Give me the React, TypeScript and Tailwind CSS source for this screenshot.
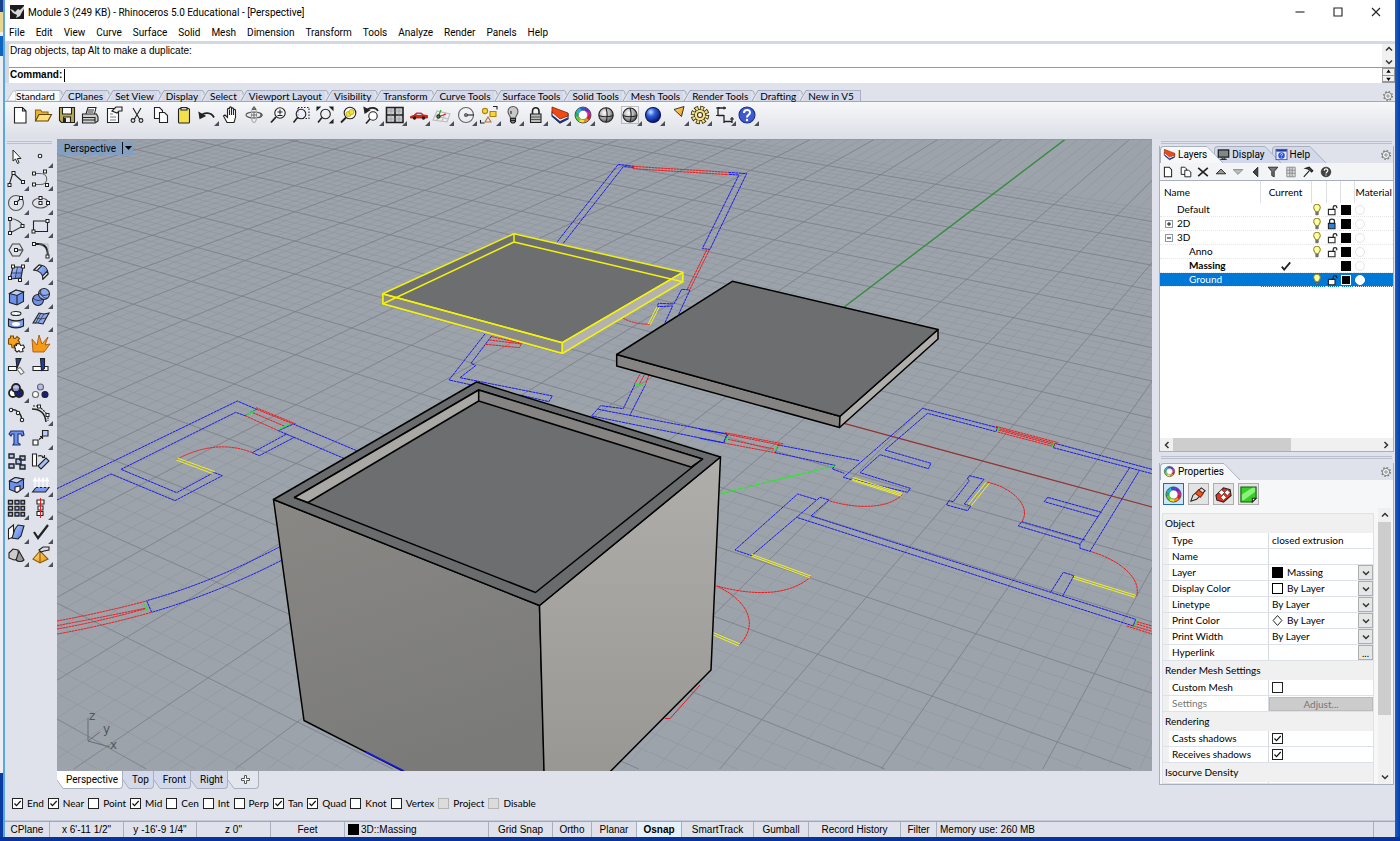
import type { ReactNode } from "react";

const lato = "font-[Lato,sans-serif] text-[10px]";
const menus = ["File", "Edit", "View", "Curve", "Surface", "Solid", "Mesh", "Dimension", "Transform", "Tools", "Analyze", "Render", "Panels", "Help"];
const toolTabs = [
  "CPlanes", "Set View", "Display", "Select", "Viewport Layout", "Visibility", "Transform", "Curve Tools",
  "Surface Tools", "Solid Tools", "Mesh Tools", "Render Tools", "Drafting", "New in V5",
];

type Tool = { name: string; art: ReactNode; more?: boolean };

const Gradients = () => (
  <svg className="absolute h-0 w-0" aria-hidden="true">
    <defs>
      <radialGradient id="blueBall" cx=".35" cy=".3" r=".7">
        <stop offset="0" stopColor="#cfe0ff" />
        <stop offset=".4" stopColor="#2f62dd" />
        <stop offset="1" stopColor="#06176e" />
      </radialGradient>
      <radialGradient id="greyBall" cx=".4" cy=".35" r=".7">
        <stop offset="0" stopColor="#ffffff" />
        <stop offset=".5" stopColor="#b4b4b4" />
        <stop offset="1" stopColor="#4c4c4c" />
      </radialGradient>
      <linearGradient id="blueFace" x1="0" y1="0" x2="1" y2="1">
        <stop offset="0" stopColor="#b9ccff" />
        <stop offset="1" stopColor="#4c78e0" />
      </linearGradient>
      <linearGradient id="gold" x1="0" y1="0" x2="1" y2="1">
        <stop offset="0" stopColor="#ffe27a" />
        <stop offset="1" stopColor="#ee8f10" />
      </linearGradient>
    </defs>
  </svg>
);

const Art = ({ children, className = "h-5 w-5" }: { children: ReactNode; className?: string }) => (
  <svg viewBox="0 0 20 20" className={className} fill="none" stroke="#222" strokeWidth="1.1" aria-hidden="true">
    {children}
  </svg>
);

const wheelColors = ["#e01b24", "#f08a1c", "#f5e61a", "#5fd02a", "#19b56a", "#18b8d8", "#2456e0", "#6a28c8", "#c81fb0"];

const Wheel = () => (
  <>
    {wheelColors.map((color, i) => (
      <circle key={color} cx="10" cy="10" r="6.2" stroke={color} strokeWidth="3.2" strokeDasharray="4.6 34.36" strokeDashoffset={-i * 4.33} />
    ))}
    <circle cx="10" cy="10" r="8" stroke="#333" strokeWidth=".8" />
    <circle cx="10" cy="10" r="4.6" stroke="#555" strokeWidth=".6" fill="#fff" />
  </>
);

const LayerMark = () => (
  <>
    <path d="M2 7v4l8 7 8-4V9z" fill="#fff" />
    <path d="M2.500 10l7.500 6 7.500-3.500v2l-7.500 3.500-7.500-6z" fill="#1d2d8c" stroke="none" />
    <path d="M2 2l16 6v3l-8 3-8-7z" fill="#f04a14" stroke="#8c1c0a" strokeWidth=".8" />
  </>
);

const Gear = () => (
  <>
    <circle cx="10" cy="10" r="7" strokeWidth="2.6" strokeDasharray="2.6 2.9" />
    <circle cx="10" cy="10" r="6" fill="inherit" />
    <circle cx="10" cy="10" r="2" />
  </>
);

const Magnifier = () => (
  <>
    <circle cx="12" cy="8" r="5.2" fill="#fff" fillOpacity=".6" />
    <path d="M8 12l-5 5.500" strokeWidth="1.8" />
  </>
);

const standardTools: Tool[] = [
  { name: "New", art: <path d="M4.500 2.500h8l3.500 3.500v12H4.500z M12.500 2.500v3.500H16" fill="#fff" /> },
  { name: "Open", art: <><path d="M2.500 16V5h5l1.500 2h6v2.500" fill="#e9b430" stroke="#8a6410" /><path d="M2.500 16L6 9.500h12.500L15 16z" fill="#ffe07a" stroke="#5d4308" /></> },
  { name: "Save", more: true, art: <><path d="M2.500 2.500h15v15h-13l-2-2z" fill="#b9ab53" /><path d="M5.500 2.500h9v6.500h-9z" fill="#fff" /><path d="M6.500 12h7v5.500h-7z" fill="#eee" /><path d="M8 13v4" strokeWidth="2" /></> },
  { name: "Print", art: <><path d="M6 9l2-6.500h8L14.500 9" fill="#fff" /><path d="M2.500 9h14l1.500 3v4l-3 2H2.500z" fill="#cfcfcf" /><path d="M3 12.500h12M3 15h12M15 12v5M8 5h6M7.500 7h6" /></> },
  { name: "Document properties", art: <><path d="M3.500 3.500h11v14h-11z" fill="#fff" /><path d="M8 6l4-4h6v4h-3l-2 2z" fill="#eee" /><path d="M6 9h3M6 12h6M6 15h6" strokeWidth=".6" /></> },
  { name: "Cut", art: <><path d="M6 3l6.500 11M14 3L7.500 14" /><circle cx="6" cy="15.500" r="1.900" /><circle cx="14" cy="15.500" r="1.900" /></> },
  { name: "Copy", art: <><path d="M3.500 2.500h5l3 3v8h-8z" fill="#fff" /><path d="M8.500 7.500h5l3 3v7h-8z" fill="#fff" /></> },
  { name: "Paste", art: <><rect x="4.500" y="3.500" width="11" height="14.500" rx="1" fill="#f4e04a" /><path d="M7 5V2.500h6V5z" fill="#ddd" /></> },
  { name: "Undo", more: true, art: <><path d="M4 11c3-4 10-4 13 1.500" strokeWidth="1.800" /><path d="M2 7.500l1 6 5-2.500z" fill="#222" /></> },
  { name: "Pan", art: <path d="M6 17.500L2.500 11l1.500-1 2.500 2.500V4.500c0-1.500 2-1.500 2 0V3c0-1.500 2-1.500 2 0v1c0-1.500 2-1.500 2 0v1.500c0-1.500 2-1.500 2 0v7l-1.500 5z M8.500 5v5M10.500 4v6M12.500 5v5" fill="#fff" /> },
  { name: "Rotate view", art: <><ellipse cx="10" cy="10" rx="8" ry="3" stroke="#555" /><ellipse cx="10" cy="10" rx="2.600" ry="7.500" stroke="#aaa" /><path d="M10 7v6M7 10h6M16 8l2.500 2-2.500 2.500M10 1.500L8 4.500h4z" fill="#777" stroke="#444" strokeWidth=".7" /></> },
  { name: "Zoom", art: <><Magnifier /><path d="M12 4.500v5M9.500 7h5M9.500 10.500h5" /></> },
  { name: "Zoom window", art: <><path d="M7 2.500h11v11H7z" strokeDasharray="1.500 1.500" /><circle cx="10" cy="9" r="4.800" fill="#eef" fillOpacity=".6" /><path d="M6.500 12.500L2.500 17.500" strokeWidth="1.600" /></> },
  { name: "Zoom extents", art: <><circle cx="10.500" cy="9" r="4.800" /><path d="M7 12.500L3 17.500" strokeWidth="1.600" /><path d="M2 5V2h3zM15 2h3v3zM18 15v3h-3z" fill="#111" /></> },
  { name: "Zoom selected", art: <><circle cx="12" cy="8" r="5.800" fill="#fff" /><g stroke="#b7a510" strokeWidth=".8"><circle cx="10.500" cy="9" r="2.600" fill="#f4e23a" /><circle cx="13.500" cy="7" r="2.600" fill="#f4e23a" /></g><path d="M8 12.500L3 17.500" strokeWidth="1.800" /></> },
  { name: "Undo view", more: true, art: <><circle cx="11" cy="11" r="4.200" fill="#fff" /><path d="M8 14l-4 4.500" strokeWidth="1.600" /><path d="M5 5c3-3 9-3 11 1" strokeWidth="1.600" /><path d="M2 2.500L3 8l4.500-3z" fill="#222" /></> },
  { name: "Four viewports", more: true, art: <><path d="M1.500 2.500h16.500v15H1.500z" fill="#c9cbd0" strokeWidth="1.600" /><path d="M10 2.500v15M1.500 10H18" strokeWidth="1.600" /><path d="M6 3v14M14 3v14M2 6h16M2 14h16" stroke="#888" strokeWidth=".5" /></> },
  { name: "Set view", more: true, art: <><path d="M1.500 11.500l3-1 3-2.500h5l2 2 4 .500v2.500H1.500z" fill="#e22314" stroke="#b01408" strokeWidth=".8" /><path d="M7 10l1.500-1.200h3L13 10z" fill="#bdf" stroke="none" /><circle cx="5.500" cy="13" r="1.200" fill="#222" /><circle cx="14.500" cy="13" r="1.200" fill="#222" /></> },
  { name: "Set CPlane", more: true, art: <><path d="M1 15l4-9 13 3-3 8zM5 15l3-8M10 16l3-8M3 11l14 3" stroke="#bbb" /><path d="M6 12l8-3" stroke="#d22" /><path d="M6 12L9 5" stroke="#2a2" /><circle cx="6.500" cy="11.500" r="1.600" /></> },
  { name: "Object snap", more: true, art: <><circle cx="10" cy="10" r="7.500" stroke="#666" /><path d="M10 10h8" /><circle cx="10" cy="10" r="1.300" fill="#fff" /></> },
  { name: "Select objects", more: true, art: <><circle cx="6" cy="6" r="2.600" fill="#f8d838" stroke="#b0830c" /><path d="M11 6.500h6v5h-6z" fill="#f8d838" stroke="#b0830c" /><path d="M6 17l3-5 3 5z" stroke="#b0703c" /><path d="M14 1.500h4v3M1.500 15v3h4" /></> },
  { name: "Hide", more: true, art: <><path d="M7.500 13c0-2-2.500-3.500-2.500-6.500a5 5 0 0110 0c0 3-2.500 4.500-2.500 6.500z" fill="#c8c8c8" stroke="#555" /><path d="M7.500 13.500h5v3l-1.500 1.500h-2l-1.500-1.500z" fill="#888" /><path d="M8 6v3M8 15.500h4" /></> },
  { name: "Lock", more: true, art: <><path d="M6.500 9V6.500C6.500 1.500 13 1.500 13 6.500V9" strokeWidth="1.600" /><path d="M4.500 9h10.500v8.500H4.500z" fill="#bcbcbc" /><path d="M5 12h9.500M5 14.500h9.500" strokeWidth=".7" /></> },
  { name: "Edit layers", more: true, art: <LayerMark /> },
  { name: "Object properties", more: true, art: <Wheel /> },
  { name: "Shade", art: <><circle cx="10" cy="10" r="7.200" fill="url(#greyBall)" /><path d="M2.800 10.500c4 1.500 10 1.500 14.400 0M10 2.800c1.500 5 1.500 10 0 14.400" /></> },
  { name: "Shaded viewport", more: true, art: <><path d="M1.500 1.500h17v17h-17z" stroke="#888" strokeDasharray="1 1" /><circle cx="10" cy="10" r="7" fill="url(#greyBall)" /><path d="M3 10.500c4 1.500 10 1.500 14 0M10 3c1.500 5 1.500 10 0 14" /></> },
  { name: "Render", more: true, art: <circle cx="10" cy="10" r="7.500" fill="url(#blueBall)" stroke="#061560" /> },
  { name: "Notes", more: true, art: <path d="M7 4.500l10-3-2.500 10z" fill="url(#gold)" strokeWidth=".9" /> },
  {
    name: "Options",
    more: true,
    art: (
      <g stroke="#3d3208">
        <circle cx="10" cy="10" r="7.300" strokeWidth="4" strokeDasharray="3.900 1.833" />
        <circle cx="10" cy="10" r="5.800" fill="#f3e08a" />
        <circle cx="10" cy="10" r="7" stroke="#f3e08a" strokeWidth="2.800" strokeDasharray="2.200 3.298" strokeDashoffset="-.800" />
        <circle cx="10" cy="10" r="2.500" fill="#fff" />
      </g>
    ),
  },
  { name: "Dimension", more: true, art: <><path d="M4 2v9M4 3h8M4 10.500h6M10 10v8M10 16.500h8M18 12v6" strokeWidth="1.300" /><path d="M2 3h4M2 10.500h4M10 1.500v3M16 14h4" /></> },
  { name: "Help topics", more: true, art: <><circle cx="10" cy="10" r="8" fill="#3d5bcf" stroke="#1f2f86" /><path d="M7 8c0-4 6-4 6-.500 0 2.500-3 2.300-3 5" stroke="#fff" strokeWidth="2" /><circle cx="10" cy="15" r="1.200" fill="#fff" stroke="none" /></> },
];

const Dot = ({ x, y }: { x: number; y: number }) => <rect x={x - 1.5} y={y - 1.5} width="3" height="3" fill="#fff" strokeWidth="1" />;

const sideTools: Tool[] = [
  { name: "Select", art: <path d="M6 4v11l2.500-2 2 4.500 1.600-.800-1.800-4.200h3.700z" fill="#fff" strokeWidth="1" /> },
  { name: "Point", more: true, art: <circle cx="9" cy="10" r="1.800" fill="#fff" /> },
  { name: "Polyline", more: true, art: <><path d="M2 16L6 4l10 9" /><Dot x={2.5} y={16} /><Dot x={6.500} y={4} /><Dot x={16} y={13} /></> },
  { name: "Curve", more: true, art: <><path d="M3 4.500h6c9 0 9 11 0 11H3" stroke="#666" /><Dot x={3} y={4.500} /><Dot x={14} y={2.500} /><Dot x={3} y={15.500} /><Dot x={16} y={16} /></> },
  { name: "Circle", more: true, art: <><circle cx="9" cy="10" r="7.500" stroke="#555" /><path d="M9 10l5-5" /><Dot x={9} y={10} /><Dot x={14} y={5} /></> },
  { name: "Ellipse", more: true, art: <><ellipse cx="9.500" cy="10" rx="8" ry="5" stroke="#555" /><Dot x={9.500} y={10} /><Dot x={9.500} y={5} /><Dot x={17} y={10} /></> },
  { name: "Arc", more: true, art: <><path d="M3 17L3 2.500c6 0 12 4 13 7.500z" stroke="#444" /><Dot x={3} y={3} /><Dot x={3} y={17} /><Dot x={15.500} y={10} /></> },
  { name: "Rectangle", more: true, art: <><path d="M2.500 5h14v10.500h-14z" /><Dot x={2.500} y={15.500} /><Dot x={16.500} y={5} /></> },
  { name: "Polygon", more: true, art: <><path d="M2 10l3.500-6h7l3.500 6-3.500 6h-7z" stroke="#444" /><path d="M9 10h6" /><Dot x={9} y={10} /></> },
  { name: "Fillet curves", more: true, art: <><path d="M2 4h6c6 0 9 4 9 13" strokeWidth="1.800" /><path d="M8 4h9v13" stroke="#999" strokeWidth=".7" /><Dot x={3} y={4} /><Dot x={16.500} y={16.500} /></> },
  { name: "Surface from points", more: true, art: <><path d="M6 4l10 0-2 11-11 1z" fill="url(#blueFace)" /><path d="M10.500 4L8 16M4 10h11" strokeWidth=".7" /><Dot x={6} y={3.500} /><Dot x={16} y={3.500} /><Dot x={3} y={15} /><Dot x={13} y={17} /></> },
  { name: "Surface fillet", more: true, art: <><path d="M3 7l5-5c6 0 9 4 9 9l-5 5c0-5-3-8-9-9z" fill="url(#blueFace)" /><path d="M3 7l5-5 3 .500-5 5zM12 16l5-5-.500-3-5 5z" fill="#fff" /></> },
  { name: "Box", more: true, art: <><path d="M2.500 6.500L9 3l7.500 2v9.500L10 18l-7.500-2.500z" fill="#6b90ee" /><path d="M2.500 6.500L10 8.500 16.500 5 9 3z" fill="#b9cdff" /><path d="M10 8.500V18" /></> },
  { name: "Boolean union", more: true, art: <><circle cx="7" cy="13" r="5.500" fill="#6f92ee" /><circle cx="13" cy="7" r="5.500" fill="#8ba8f5" /><path d="M2 11c3 3 7 3 10 1M8 6c3 3 7 3 10 1M10 3c-2 4 3 9 6 8" strokeWidth=".8" /></> },
  { name: "Extract edge", more: true, art: <><ellipse cx="9" cy="3.500" rx="5" ry="2" fill="#fff" /><path d="M1.500 9c4 2.500 11 2.500 15 0v7c-4 2.500-11 2.500-15 0z" fill="#7f9fee" /><ellipse cx="9" cy="14" rx="4" ry="2" fill="#fff" stroke="none" /></> },
  { name: "Mesh", more: true, art: <><path d="M2 13l6-10 5 1 5-1-6 11-5-1z" fill="#8da8f0" /><path d="M5 8l5 1 5-1M7 13l6-9M4.500 13.500l5-9.500" strokeWidth=".7" /></> },
  { name: "Join", art: <><path d="M1.500 5l2-1V2h3v2l2 .500 1.500-2 2.500 2-1.500 2 1.500 1.500-1 3-2.500-1-1.500 1.500.500 2.500-3-.500-.500-3-3-.500z" fill="#f5a31c" stroke="#7a4a05" /><path d="M7 12l2.500-.500.500-2 3 .500.500 1.500 3-.500 1 2.500-2 1.500.500 2.500-3 .500-1-1.500-2 1.500-2-2 .500-1.500z" fill="#fff" /></> },
  { name: "Explode", art: <path d="M2 18L1 5l5 6L8 1l3 9 6-7-3 8 5-1-6 8z" fill="#f59a14" stroke="#a34b05" strokeWidth=".8" /> },
  { name: "Trim", art: <><path d="M1.500 9.500h8v4h-8z" fill="#fff" /><path d="M10 12l3-1.500 4 5-3 2z" fill="#fff" stroke="#777" /><path d="M9 1.500h5L10 11z" fill="#1f3fa8" /></> },
  { name: "Split", art: <><path d="M2 9.500h15v4H2z" fill="#fff" /><path d="M9.500 1.500h4v10l-3 2z" fill="#1f3fa8" /></> },
  { name: "Group", more: true, art: <><circle cx="6" cy="12" r="4" fill="#fff" strokeWidth="1.800" /><circle cx="12" cy="12" r="4" fill="#1a1a80" strokeWidth="1.800" /><circle cx="9" cy="7" r="4" fill="#aab6f8" fillOpacity=".8" strokeWidth="1.800" /></> },
  { name: "Ungroup", art: <><circle cx="4.500" cy="13.500" r="3" fill="#fff" stroke="#666" /><circle cx="14" cy="13.500" r="3" fill="#1a1a80" /><circle cx="9.500" cy="6" r="3" fill="#b4bcf4" stroke="#666" /></> },
  { name: "Curve points", art: <><path d="M2 6c8-2 13 4 13 12" strokeWidth="1.500" /><circle cx="4" cy="6" r="1.700" fill="#fff" /><circle cx="11" cy="9" r="1.700" fill="#fff" /><circle cx="15" cy="16" r="1.700" fill="#fff" /></> },
  { name: "Edit points", more: true, art: <><path d="M1 5c8 0 13 4 14 13" strokeWidth="1.500" /><path d="M2 2h6l9 9v6" strokeDasharray="2 1" /><Dot x={8} y={2.500} /><Dot x={16.500} y={11} /></> },
  { name: "Text", art: <path d="M2 6l2-3 12 0 1 4-2 1-1-2h-3v9l2 1v1H6l1-2V6H5L4 8z" fill="#6f92e8" stroke="#16307e" /> },
  { name: "Move", more: true, art: <><path d="M11.500 2.500h5.500V8h-5.500z" fill="#b9ccff" /><path d="M2 12h5v5H2z" fill="#fff" /><path d="M8 11.500L11 9M9 8.500h2.500V11" /></> },
  { name: "Array", art: <><path d="M2 3h5v4H2zM13 5h5v4h-5zM9 8h5v5H9zM2 13h5v4H2zM13 14h5v4h-5z" fill="#a9c0fb" strokeWidth="1.400" /></> },
  { name: "Rotate", art: <><path d="M1.500 3h4v12h-4z" fill="#fff" /><path d="M7 15l8-8 3 3-8 8z" fill="#a9c0fb" /><path d="M7 5c3-1 5 0 6 2M11 6.500h2.500V4" /></> },
  { name: "Solid edit", more: true, art: <><path d="M2.500 6L8 2.500l8.500 1.500v9L10 17.500l-7.500-3z" fill="#6b90ee" /><path d="M2.500 6L10 8l6.500-4L8 2.500z" fill="#c3d3ff" /><path d="M8 12l5-1v4.500l-3 2-2-1z" fill="#fff" /></> },
  { name: "Project", more: true, art: <><path d="M1.500 17L5 12.500h13L14.500 17z" fill="#7b9bf0" /><path d="M4 13V4M8 13V4M12 13V4M16 13V4M2.500 6L4 3l1.500 3zM6.500 6L8 3l1.500 3zM10.500 6L12 3l1.500 3zM14.500 6L16 3l1.500 3z" stroke="#fff" fill="#fff" /></> },
  { name: "Grid array", more: true, art: <path d="M1.500 2.500h4v3.500h-4zM8 2.500h4v3.500H8zM14 2.500h3.500v3.500H14zM1.500 8.500h4V12h-4zM8 8.500h4V12H8zM14 8.500h3.500V12H14zM1.500 14.500h4V18h-4zM8 14.500h4V18H8zM14 14.500h3.500V18H14z" fill="#b4c6fb" strokeWidth="1.400" /> },
  { name: "Align", more: true, art: <><path d="M6 2h7v4H6zM7 8h5v4H7zM6 13.500h6v4H6z" fill="#fff" /><path d="M9.500 0v20" stroke="#e02020" /></> },
  { name: "Bend", more: true, art: <><path d="M1.500 7l5-4v12l-5 2z" fill="#fff" /><path d="M8 7l3-4 6 1-3 10-3 3-6-1z" fill="url(#blueFace)" /></> },
  { name: "Check", more: true, art: <path d="M3 10l4 6L17 3" strokeWidth="2.200" /> },
  { name: "Surface tools", more: true, art: <><path d="M2 8l4-4 5 1 1 9-5 1-5-2z" fill="#ccc" /><path d="M9 15l3-9 5 9c-2 2-6 2-8 0z" fill="#999" /></> },
  { name: "Render mesh", more: true, art: <><path d="M2 14l7-8 8 8-8 4z" fill="url(#gold)" stroke="#8a5a08" /><path d="M9 6v12" stroke="#8a5a08" /><path d="M8 5l4-3h6v3l-5 1-3 1z" fill="#ddd" /></> },
];

const ToolButton = ({ tool }: { tool: Tool }) => (
  <button type="button" aria-label={tool.name} className="relative flex flex-1 items-center justify-center">
    <Art>{tool.art}</Art>
    {tool.more && (
      <svg viewBox="0 0 5 5" className="absolute right-0 bottom-0 h-[5px] w-[5px]" aria-hidden="true">
        <path d="M5 0v5H0z" fill="#4b4f58" />
      </svg>
    )}
  </button>
);

const GearIcon = () => (
  <button type="button" aria-label="Panel options" className="ml-auto flex items-center px-px">
    <svg viewBox="0 0 20 20" className="h-3 w-3" fill="#f2f3f6" stroke="#777" strokeWidth="1.4" aria-hidden="true"><Gear /></svg>
  </button>
);

/* ---- viewport ---- */

const horizon = -272;
const base = 769;

const fan = (vanish: number, start: number, step: number, from: number, to: number) =>
  Array.from({ length: to - from + 1 }, (_, i) => `M${vanish} ${horizon}L${start + (from + i) * step} ${base}`).join("");

// ground grid: both families meet on one horizon, five minor cells in each major one
const minorGrid = fan(-1714, 2116, 49.24, -80, 48) + fan(1608.5, 235.2, 32.3, -85, 36);
const majorGrid = fan(-1714, 2116, 246.2, -16, 9) + fan(1608.5, 235.2, 161.5, -17, 7);

const Plan = ({ x, y, walls, windows, doors, marks = "" }: { x: number; y: number; walls: string; windows: string; doors: string; marks?: string }) => (
  <g transform={`translate(${x} ${y}) scale(.3333)`} fill="none" strokeWidth="3">
    <path d={walls} stroke="#1717f0" strokeDasharray="9 1.500" />
    <path d={windows} stroke="#f01818" strokeDasharray="8 1.500" />
    <path d={doors} stroke="#f2f21c" />
    <path d={marks} stroke="#22ee22" strokeWidth="4" />
  </g>
);

const Scene = () => (
  <svg viewBox="57 140 1095 631" preserveAspectRatio="xMidYMid slice" className="absolute inset-0 h-full w-full" role="img" aria-label="Perspective view">
    <defs>
      <linearGradient id="boxLeft" x1="0" y1="0" x2=".3" y2="1">
        <stop offset="0" stopColor="#898885" />
        <stop offset="1" stopColor="#7a7a79" />
      </linearGradient>
      <linearGradient id="boxRight" x1="0" y1="0" x2="0" y2="1">
        <stop offset="0" stopColor="#b0aeab" />
        <stop offset="1" stopColor="#979693" />
      </linearGradient>
    </defs>
    <rect x="0" y="0" width="1400" height="841" fill="#9ca3ab" />
    <path d={minorGrid} stroke="#8f969e" strokeWidth=".6" />
    <path d={majorGrid} stroke="#7c7d87" strokeWidth=".7" />
    <path d="M731 392.700L1180 514.600" stroke="#963232" strokeWidth="1.200" />
    <path d="M731 392.700L1080 128" stroke="#2f8f38" strokeWidth="1.200" />

    <Plan
      x={350}
      y={140}
      walls="M622 305L805 73 853 79M640 310L820 80 853 82M1135 97L1190 101 1080 328 1057 326 1167 105 1135 103M945 548L968 498 922 500 925 490 972 492 995 448 1020 450 985 525M405 582L297 720 365 735M425 588L363 670 377 677 330 713 607 768 597 785 510 765M855 733L820 806 752 797 725 828 1120 908 1132 882 745 808M885 737L840 825"
      windows="M848 79L1135 97M848 86L1135 104M1078 330L1020 448M1070 330L1012 448M820 535Q850 552 898 553M425 590L515 610 508 623 408 613M418 600L515 612M870 703L853 733M883 705L868 733M897 705L885 737"
      doors="M921 500L895 552M927 502L901 554"
      marks="M855 733L885 737"
    />
    <Plan
      x={700}
      y={380}
      walls="M0 148L84 163 72 189 0 175M225 218L235 195 478 242M225 218L405 256 397 267 433 280M455 299L430 292 668 85 893 143 888 155 683 100 555 210 693 250 685 266 540 224 480 278 631 325 623 337 455 297M1356 268L1065 190 1060 203 1356 281M1290 262L1140 493V505L1170 514 1318 272M1205 397L1043 352 1033 365 1195 411M1155 480L965 425 955 438 1140 493M808 287L852 298 793 372 812 378 803 392 740 375 747 362 760 365 808 302 802 297zM348 359L293 342 105 510 155 527 360 352 387 360 333 408 1307 718 1300 738 290 412M1052 637L1090 577 1122 587 1088 648"
      windows="M75 158L250 192M80 163L245 196M84 178L222 207M72 189L225 218M888 139L1075 188M890 144L1072 192M895 150L1065 195M893 156L1058 199M862 307C930 320 995 375 967 423M607 344C560 390 460 385 387 362M1170 514C1260 540 1325 595 1310 648M1310 725L1356 738M1310 732L1356 746M1300 738L1356 754M1280 738L1356 762M333 590C270 645 170 650 50 618C130 655 185 725 118 795"
      doors="M455 297L605 344M458 292L607 340M457 301L603 348M858 307L805 374M868 310L814 377M1122 589L1307 646M1120 595L1305 652M155 523L333 588M155 529L331 594M38 757L120 792M38 764L116 798"
      marks="M84 168L76 184M232 198L224 215M896 144L892 158M1062 186L1057 200M1310 722L1304 740"
    />
    <path d="M720 493.700L834.500 466" stroke="#22ee22" strokeWidth="1.300" strokeDasharray="5 1" />
    <Plan
      x={50}
      y={380}
      walls="M0 336L562 63 620 88 585 107 557 97 213 268 380 338 487 280M0 370L183 282 375 362 517 287 490 277M920 212L730 132 685 152 882 235M710 162L607 218 628 227 733 172M690 500Q480 610 290 662L305 697Q500 640 693 542"
      windows="M618 83L738 132M620 88L730 132M608 98L705 139M585 107L685 152M380 238Q500 175 607 218M0 727Q150 700 290 663M0 741Q150 713 285 685M0 751Q150 725 290 685M0 766Q150 740 305 697"
      doors="M382 234L495 275M379 240L488 281"
      marks="M617 92L590 104M718 132L690 147M284 672L292 694"
    />
    <path d="M700 685L670 718.500h-5" stroke="#f01818" fill="none" />

    <g stroke="#000" strokeWidth="1.500" strokeLinejoin="round">
      <path d="M273.500 499.500L539.500 605.500 545 790H440L304 720.500z" fill="url(#boxLeft)" />
      <path d="M539.500 605.500L720.500 457 711 670 592 790H544.500z" fill="url(#boxRight)" />
      <path d="M273.500 499.500L476.500 382 720.500 457 539.500 605.500z" fill="#6a6b6d" />
      <path d="M294.500 497.500L478.700 390 702.500 459 535.500 592.500z" fill="#6d6e70" />
      <path d="M294.500 497.500L478.700 390V401L308 502.500z" fill="#a9a8a5" />
      <path d="M478.700 390L702.500 459 691 467 478.700 401z" fill="#858482" />
      <path d="M616.700 354.500V366L839.500 427.500 840 416.300z" fill="#858482" />
      <path d="M840 416.300L938 329.500V339L839.500 427.500z" fill="#b0aeab" />
      <path d="M616.700 354.500L732.300 281.300 938 329.500 840 416.300z" fill="#6d6e70" />
    </g>
    <path d="M366 752L404 771" stroke="#1717f0" strokeWidth="1.500" />

    <g stroke="#f2f20a" strokeWidth="1.500" strokeLinejoin="round" fill="none">
      <path d="M382.700 293.700L514 233.700 682.700 272.300V281.700L562.300 353.300 383 303.700z" fill="#6d6e70" />
      <path d="M383 294L562.300 342.700V353.300L383 303.700z" fill="#8a8a88" />
      <path d="M562.300 342.700L682.700 272.300V281.700L562.300 353.300z" fill="#b3b2b0" />
      <path d="M383 303.700L514 242 682.700 281.700M514 233.700V242M382.700 293.700L562.300 342.700 682.700 272.300" />
    </g>

    <path d="M88 718v23l12-9M88 741l22 6" stroke="#6a6c72" fill="none" />
    <g fill="#54565c" className="font-['DejaVu_Sans',sans-serif] text-[12px]">
      <text x="89" y="720">z</text>
      <text x="103" y="733">y</text>
      <text x="110" y="749">x</text>
    </g>
  </svg>
);

/* ---- panels ---- */

const Check = ({ label, on = false, disabled = false }: { label?: string; on?: boolean; disabled?: boolean }) => (
  <span className="relative flex h-[11px] w-[11px] shrink-0">
    <input
      type="checkbox"
      defaultChecked={on}
      disabled={disabled}
      aria-label={label}
      className="peer h-[11px] w-[11px] appearance-none border border-[#222] bg-white disabled:border-[#b5b5b5] disabled:bg-[#dcdcdc]"
    />
    <svg viewBox="0 0 11 11" className="pointer-events-none absolute inset-0 hidden peer-checked:block" aria-hidden="true">
      <path d="M2.500 5.500l2 2.200 4.200-4.700" fill="none" stroke="#111" strokeWidth="1.200" />
    </svg>
  </span>
);

const Chevron = ({ d }: { d: string }) => (
  <svg viewBox="0 0 10 10" className="h-2.5 w-2.5" fill="none" stroke="#333" strokeWidth="1.5" aria-hidden="true">
    <path d={d} />
  </svg>
);
const up = "M2 6.500l3-3 3 3";
const down = "M2 3.500l3 3 3-3";

const Grip = () => <div className="mx-0.5 h-[3px] shrink-0 border-y border-[#b9bfcc]" />;

const DisplayMark = () => (
  <>
    <rect x="2" y="3" width="16" height="11" fill="#7d8a84" strokeWidth="2" />
    <path d="M5 17.500h10M8 15v2h4v-2" strokeWidth="1.500" />
  </>
);

const HelpMark = () => (
  <>
    <rect x="1.500" y="2" width="17" height="16" fill="#e4eaff" stroke="#22369c" />
    <path d="M2 4h16" stroke="#22369c" strokeWidth="3" />
    <circle cx="10" cy="11.500" r="5" fill="#2f55d8" stroke="none" />
    <path d="M8.500 10c0-2 3-2 3 0 0 1-1.500 1-1.500 2.500M10 13.500v1" stroke="#fff" />
  </>
);

const PanelTab = ({ label, art, active = false }: { label: string; art: ReactNode; active?: boolean }) => (
  <button type="button" className="relative -mr-[11px] flex h-[17px] items-center gap-0.5 pl-[3px]">
    <Art className="h-[13px] w-[13px]">{art}</Art>
    {label}
    <svg viewBox="0 0 20 17" className={`relative -ml-1 h-[17px] w-5 ${active ? "-z-10" : "-z-20"}`} aria-hidden="true">
      <path d="M0 0h2l16 17H0z" fill={active ? "#f6f7f9" : "#d3d9ea"} />
      <path d="M0 .500h2L18 17" fill="none" stroke="#a8b0c0" />
    </svg>
    <span className={`absolute top-0 right-5 bottom-0 left-0 rounded-tl-sm border-t border-l border-[#a8b0c0] ${active ? "-z-10 bg-[#f6f7f9]" : "-z-30 bg-[#d3d9ea]"}`} />
  </button>
);

const layerTools: Tool[] = [
  { name: "New layer", art: <path d="M4 2h8l4 4v12H4z" fill="#fff" strokeWidth="1.700" /> },
  { name: "New sublayer", art: <><path d="M2 2h6l3 3v9H2z" fill="#fff" strokeWidth="1.600" /><path d="M8 7h6l4 3v8H8z" fill="#fff" strokeWidth="1.600" /></> },
  { name: "Delete layer", art: <path d="M2 3l16 14M18 3L2 17" strokeWidth="2.800" /> },
  { name: "Move up", art: <path d="M2 13l8-8 8 8z" fill="#999" strokeWidth="1.500" /> },
  { name: "Move down", art: <path d="M2 6h16l-8 8z" fill="#bbb" stroke="#888" strokeWidth="1.500" /> },
  { name: "Move left", art: <path d="M13 2v16L5 10z" fill="#444" strokeWidth="1.500" /> },
  { name: "Filter", art: <path d="M2 2h16l-6 7v9l-4-2V9z" fill="#777" strokeWidth="1.500" /> },
  { name: "Columns", art: <path d="M3 2h14v16H3zM3 7h14M3 12h14M8 2v16M12 2v16" fill="#ddd" stroke="#888" strokeWidth="1.500" /> },
  { name: "Tools", art: <path d="M3 18L12 8M6 4l6-2 6 6-2 2-3-3-3-2z" fill="#555" strokeWidth="1.900" /> },
  { name: "Layer help", art: <><circle cx="10" cy="10" r="8" fill="#444" /><path d="M7 8c0-4 6-4 6-.500 0 2.500-3 2.300-3 5M10 14v2" stroke="#fff" strokeWidth="2" /></> },
];

const layers = [
  { name: "Default", depth: "pl-[17px]", lock: "open", bulb: true },
  { name: "2D", depth: "pl-[17px]", lock: "closed", bulb: true, sign: "+" },
  { name: "3D", depth: "pl-[17px]", lock: "open", bulb: true, sign: "−" },
  { name: "Anno", depth: "pl-[29px]", lock: "open", bulb: true },
  { name: "Massing", depth: "pl-[29px] font-bold", lock: "", bulb: false, current: true },
  { name: "Ground", depth: "pl-[29px]", lock: "open", bulb: true, picked: true },
];

const LayersPanel = () => (
  <section aria-label="Layers" className="flex h-[306px] shrink-0 flex-col border border-[#a8b0c0] border-t-0 bg-[#dfe2ea]">
    <div className="isolate flex h-[17px] shrink-0">
      <PanelTab label="Layers" art={<LayerMark />} active />
      <PanelTab label="Display" art={<DisplayMark />} />
      <PanelTab label="Help" art={<HelpMark />} />
      <GearIcon />
    </div>
    <div className="h-[18px] shrink-0 border-b border-[#a8b0c0] bg-[#f3f4f6] px-[2px]">
      <div className="flex h-full w-[170px] items-center justify-between">
        {layerTools.map((tool) => (
          <button key={tool.name} type="button" aria-label={tool.name}>
            <Art className="h-3 w-3">{tool.art}</Art>
          </button>
        ))}
      </div>
    </div>
    <div className={`min-h-0 flex-1 bg-white ${lato}`}>
      <table className="w-full table-fixed border-collapse text-left leading-[13px]">
        <thead>
          <tr className="h-[22px]">
            <th className="w-[100px] border-r border-[#dcdfe5] p-0 pl-1 font-normal">Name</th>
            <th className="w-[51px] border-r border-[#dcdfe5] p-0 text-center font-normal">Current</th>
            <th className="w-[15px] border-r border-[#dcdfe5] p-0" aria-label="On" />
            <th className="w-[14px] border-r border-[#dcdfe5] p-0" aria-label="Locked" />
            <th className="w-[14px] border-r border-[#dcdfe5] p-0" aria-label="Color" />
            <th className="p-0 pl-px font-normal">Material</th>
          </tr>
        </thead>
        <tbody>
          {layers.map((layer) => (
            <tr key={layer.name} className={`border-b border-dotted border-[#e4e6ea] ${layer.picked ? "bg-[#0078d7] text-white" : ""}`}>
              <td className={`relative p-0 ${layer.depth}`}>
                {layer.sign && (
                  <button type="button" aria-label={`Toggle ${layer.name}`} className="absolute top-[3px] left-[5px] flex h-2 w-2 border border-[#8b98ac] bg-white">
                    <svg viewBox="0 0 6 6" className="h-1.5 w-1.5" stroke="#111" aria-hidden="true">
                      <path d={layer.sign === "+" ? "M1 3h4M3 1v4" : "M1 3h4"} />
                    </svg>
                  </button>
                )}
                {layer.name}
              </td>
              <td className="p-0">
                {layer.current && <Art className="mx-auto h-3 w-3"><path d="M3 11l4 5L17 4" strokeWidth="3" /></Art>}
              </td>
              <td className="p-0">
                {layer.bulb && (
                  <Art className="h-3 w-3">
                    <path d="M7.500 13c0-2-3-3.500-3-7a5.500 5.500 0 0111 0c0 3.500-3 5-3 7z" fill="#ffffa8" stroke="#8f8a1c" strokeWidth="1.700" />
                    <path d="M8 14h4v4H8z" fill="#777" stroke="#555" />
                  </Art>
                )}
              </td>
              <td className="p-0">
                {layer.lock && (
                  <Art className="h-3 w-3">
                    <path d={layer.lock === "open" ? "M12 9V5c0-3 6-3 6 0v2" : "M6 9V5c0-4 8-4 8 0v4"} strokeWidth="2" />
                    <path d="M4 9h11v9H4z" fill={layer.lock === "open" ? "#fff" : "#2f7de0"} strokeWidth="1.800" />
                  </Art>
                )}
              </td>
              <td className="p-0 pl-px">
                <span className={`block h-2.5 w-2.5 border bg-black ${layer.picked ? "border-white" : "border-black"}`} />
              </td>
              <td className="p-0 pl-px">
                <span className={`block h-2.5 w-2.5 rounded-full border ${layer.picked ? "border-white bg-white" : "border-[#e4e4e4]"}`} />
              </td>
            </tr>
          ))}
        </tbody>
      </table>
    </div>
    <div className="flex h-[13px] shrink-0 items-center bg-[#f0f0f0] px-0.5">
      <Chevron d="M6.500 2l-3 3 3 3" />
      <div className="mx-px h-full flex-1"><div className="h-full w-[57%] bg-[#cdcdcd]" /></div>
      <Chevron d="M3.500 2l3 3-3 3" />
    </div>
  </section>
);

const Row = ({ label, muted = false, children }: { label: string; muted?: boolean; children?: ReactNode }) => (
  <label className={`flex h-4 items-stretch border-b border-[#dde1ea] pl-[6px] ${muted ? "text-[#777]" : ""}`}>
    <span className="w-[100px] shrink-0 border-r border-[#d4d9e4] bg-white pl-[3px] leading-[15px]">{label}</span>
    <span className="flex min-w-0 flex-1 items-center bg-white">{children}</span>
  </label>
);

const PropSelect = ({ value, mark }: { value: string; mark?: ReactNode }) => (
  <span className="relative flex h-full w-full items-center pl-[3px]">
    {mark}
    <select className="h-full min-w-0 flex-1 appearance-none bg-transparent pr-4 outline-none" defaultValue={value}>
      <option>{value}</option>
    </select>
    <span className="pointer-events-none absolute inset-y-0 right-0 flex w-[15px] items-center justify-center border border-[#adadad] bg-[#e6e6e6]">
      <Chevron d={down} />
    </span>
  </span>
);

const PropHead = ({ children }: { children: ReactNode }) => <h3 className="h-[19px] pl-[2px] leading-[19px]">{children}</h3>;

const pageTools: Tool[] = [
  { name: "Object", art: <Wheel /> },
  { name: "Material", art: <><path d="M2 17l2-6 9-8 4 3-9 9z" fill="#ddd" /><path d="M10 5l5 4-3 4-5-4z" fill="#f0561c" stroke="#8c2508" /></> },
  { name: "Texture mapping", art: <><path d="M2 11l8-8 7 2 1 6-8 7-7-2z" fill="#e8301c" /><path d="M5 8l3 3 3-3-3-3zM11 8l3 3 3-3-3-3zM7 13l3 3 3-3-3-3z" fill="#fff" strokeWidth=".600" /></> },
  { name: "Decals", art: <><path d="M2 2h16v12l-4 4H2z" fill="#35d024" stroke="#0f5c0c" /><path d="M3 10L14 3h3v4L5 16H3z" fill="#8cf07c" stroke="none" /><path d="M18 14h-4v4z" fill="#fff" /></> },
];

const PropertiesPanel = () => (
  <section aria-label="Properties" className="flex h-[322px] shrink-0 flex-col border border-[#a8b0c0] border-t-0 bg-[#dfe2ea]">
    <div className="isolate flex h-[17px] shrink-0">
      <PanelTab label="Properties" art={<Wheel />} active />
      <GearIcon />
    </div>
    <div className="flex shrink-0 gap-1 bg-[#f6f7f9] p-[3px]">
      {pageTools.map((tool, i) => (
        <button
          key={tool.name}
          type="button"
          aria-label={tool.name}
          className={`flex h-[22px] w-[21px] items-center justify-center border ${i === 0 ? "border-[#1a6fc4] bg-[#cfe4f7]" : "border-[#adadad] bg-[#e3e3e3]"}`}
        >
          <Art className="h-[19px] w-[19px]">{tool.art}</Art>
        </button>
      ))}
    </div>
    <div className="flex min-h-0 flex-1 gap-1 bg-[#f6f7f9] pr-[2px] pl-[2px]">
      <div className={`mt-[5px] min-w-0 flex-1 overflow-hidden border border-[#dde1ea] bg-[#f0f0f0] ${lato}`}>
        <PropHead>Object</PropHead>
        <Row label="Type"><input className="w-full pl-[3px] outline-none" defaultValue="closed extrusion" readOnly /></Row>
        <Row label="Name"><input className="w-full pl-[3px] outline-none" /></Row>
        <Row label="Layer"><PropSelect value="Massing" mark={<i className="mr-1 h-[11px] w-[11px] bg-black" />} /></Row>
        <Row label="Display Color"><PropSelect value="By Layer" mark={<i className="mr-1 h-[11px] w-[11px] border border-black" />} /></Row>
        <Row label="Linetype"><PropSelect value="By Layer" /></Row>
        <Row label="Print Color">
          <PropSelect value="By Layer" mark={<Art className="mr-1 h-[11px] w-[11px]"><path d="M10 1l8 9-8 9-8-9z" strokeWidth="1.800" /></Art>} />
        </Row>
        <Row label="Print Width"><PropSelect value="By Layer" /></Row>
        <Row label="Hyperlink">
          <input className="min-w-0 flex-1 pl-[3px] outline-none" />
          <button type="button" className="h-full w-[15px] border border-[#adadad] bg-[#e6e6e6] leading-3">...</button>
        </Row>
        <PropHead>Render Mesh Settings</PropHead>
        <Row label="Custom Mesh"><span className="pl-[3px]"><Check label="Custom Mesh" /></span></Row>
        <Row label="Settings" muted><button type="button" disabled className="h-[14px] w-full border border-[#bbb] bg-[#cccccc] leading-3">Adjust...</button></Row>
        <PropHead>Rendering</PropHead>
        <Row label="Casts shadows"><span className="pl-[3px]"><Check label="Casts shadows" on /></span></Row>
        <Row label="Receives shadows"><span className="pl-[3px]"><Check label="Receives shadows" on /></span></Row>
        <PropHead>Isocurve Density</PropHead>
        <Row label="" />
      </div>
      <div className="flex w-[13px] shrink-0 flex-col items-center bg-[#f0f0f0]">
        <div className="flex h-[14px] items-center"><Chevron d={up} /></div>
        <div className="w-full flex-1"><div className="h-[78%] w-full bg-[#cdcdcd]" /></div>
        <div className="flex h-[14px] items-center"><Chevron d={down} /></div>
      </div>
    </div>
  </section>
);

/* ---- bars ---- */

const Slash = ({ first = false }: { first?: boolean }) => (
  <svg viewBox="0 0 9 11" className="h-[11px] w-[9px] shrink-0" aria-hidden="true">
    {first ? (
      <path d="M0 11L6 1h3v10z" fill="#f8f9fb" stroke="#a8b0c0" strokeWidth=".7" />
    ) : (
      <>
        <path d="M4 11L8 1h1v10z" fill="#d3d9ea" />
        <path d="M0 .500c3 0 3 2 3 4M1 11L7 .500h2" fill="none" stroke="#9aa3b6" />
      </>
    )}
  </svg>
);

const snaps: [string, boolean, boolean?][] = [
  ["End", true], ["Near", true], ["Point", false], ["Mid", true], ["Cen", false], ["Int", false], ["Perp", false],
  ["Tan", true], ["Quad", true], ["Knot", false], ["Vertex", false], ["Project", false, true], ["Disable", false, true],
];

const statusCells: [string, string][] = [
  ["CPlane", "w-[45px]"], ["x 6'-11 1/2\"", "w-[74px]"], ["y -16'-9 1/4\"", "w-[73px]"], ["z 0\"", "w-[74px]"], ["Feet", "w-[74px]"],
];
const statusModes: [string, string][] = [
  ["Grid Snap", "w-[64px]"], ["Ortho", "w-[39px]"], ["Planar", "w-[45px]"], ["Osnap", "w-[45px] font-bold bg-[#e6f2fb]"],
  ["SmartTrack", "w-[72px]"], ["Gumball", "w-[55px]"], ["Record History", "w-[92px]"], ["Filter", "w-[36px]"],
];

const App = () => {
  return (
    <div className="flex h-screen flex-col bg-[#06349b] pb-1 font-[Roboto,sans-serif] text-[10px] text-black">
      <Gradients />
      <div className="flex min-h-0 flex-1">
        <div className="flex w-[5px] shrink-0 flex-col border-r-2 border-[#58a6e4] bg-[#eceef2]">
          <div className="h-3 bg-[#1c3f8c]" />
          <div className="h-5 bg-[#e9d58c]" />
          <div className="mt-1 h-5 bg-[#0f66bd]" />
          <div className="flex-1" />
          <div className="h-16 bg-[#0b3b9e]" />
        </div>

        <div className="flex min-w-0 flex-1 flex-col bg-[#dfe2ea]">
          <header className="bg-white">
            <div className="flex h-6 items-center pl-[5px]">
              <svg viewBox="0 0 14 14" className="h-[14px] w-[14px]" aria-hidden="true">
                <path d="M0 0h14v14H0z" fill="#1c1c1c" />
                <path d="M0 4l3 1 2 2 3-3 2 1 4-4v3l-2 3-2 4-4 2 1-3-4-2z" fill="#d8d8d8" />
              </svg>
              <h1 className="ml-1">Module 3 (249 KB) - Rhinoceros 5.0 Educational - [Perspective]</h1>
              <div className="ml-auto flex">
                {["M5.500 10h9", "M6 6h8v8H6z", "M6 6l8 8M14 6l-8 8"].map((d, i) => (
                  <button key={d} type="button" aria-label={["Minimize", "Maximize", "Close"][i]} className="flex w-[38px] justify-center">
                    <Art>{<path d={d} />}</Art>
                  </button>
                ))}
              </div>
            </div>
            <nav className="flex h-[17px] items-center gap-[11px] pl-1">
              {menus.map((menu) => <button key={menu} type="button">{menu}</button>)}
            </nav>
          </header>

          <div className="shrink-0 border-t-[3px] border-l-4 border-[#d3d8e2] font-['Liberation_Sans',sans-serif]">
            <div className="flex h-6 border-b border-[#8f99ac] bg-white">
              <p className="flex-1 pl-px leading-[13px]">Drag objects, tap Alt to make a duplicate:</p>
              <div className="flex w-[13px] flex-col items-center justify-between bg-[#f0f0f0]"><Chevron d={up} /><Chevron d={down} /></div>
            </div>
            <div className="flex h-[15px] bg-white">
              <label htmlFor="command" className="pl-px leading-[14px] font-bold">Command:</label>
              <input id="command" className="my-px ml-[2px] min-w-0 flex-1 border-l border-black outline-none" />
              <div className="flex w-[13px] flex-col border border-[#999]">
                {["M3 6l2-3 2 3z", "M3 4l2 3 2-3z"].map((d) => (
                  <svg key={d} viewBox="0 0 10 10" preserveAspectRatio="xMidYMid slice" className="min-h-0 w-full flex-1 border-b border-[#999] bg-[#f0f0f0]" aria-hidden="true"><path d={d} /></svg>
                ))}
              </div>
            </div>
          </div>

          <div className={`mt-[7px] flex h-3 shrink-0 items-stretch border-b border-[#9fa9ba] pl-0.5 ${lato}`}>
            <Slash first />
            <button type="button" className="border-t border-[#a8b0c0] bg-[#f8f9fb] pr-1 leading-[11px]">Standard</button>
            {toolTabs.map((tab) => (
              <div key={tab} className="flex">
                <Slash />
                <button type="button" className="border-t border-[#a8b0c0] bg-[#d3d9ea] pr-[3px] leading-[11px]">{tab}</button>
              </div>
            ))}
            <span className="w-1 border-t border-r border-[#a8b0c0] bg-[#d3d9ea]" />
            <GearIcon />
          </div>

          <div className="flex h-[37px] shrink-0 items-start bg-linear-to-b from-[#f6f7f8] to-[#dcdfe7] pt-[2px] pl-[3px]">
            <div className="flex h-[22px] w-[751px]">
              {standardTools.map((tool) => <ToolButton key={tool.name} tool={tool} />)}
            </div>
          </div>

          <div className="flex min-h-0 flex-1">
            <div className="flex min-w-0 flex-1 flex-col">
              <div className="flex min-h-0 flex-1">
                <aside className="w-[52px] shrink-0 pt-[2px] pr-[3px]">
                  <Grip />
                  <div className="grid h-[423px] auto-rows-fr grid-cols-[24px_24px]">
                    {sideTools.map((tool) => (
                      <ToolButton key={tool.name} tool={tool} />
                    ))}
                  </div>
                </aside>
                <main className="relative min-w-0 flex-1 overflow-hidden border-t border-[#8d97a8]">
                  <Scene />
                  <button type="button" className="absolute top-px left-px flex h-[14px] items-center bg-[#83a0c2] pl-1.5">
                    Perspective
                    <span className="mx-1.5 h-3 w-px bg-[#111]" />
                    <svg viewBox="0 0 7 5" className="-ml-1 mr-px h-[5px] w-[7px]" aria-hidden="true"><path d="M0 0h7L3.500 4z" /></svg>
                  </button>
                </main>
              </div>
              <div className="flex h-[18px] shrink-0 pl-[52px]">
                {["Perspective", "Top", "Front", "Right", "+"].map((tab, i) => (
                  <div key={tab} className="flex">
                    <svg viewBox="0 0 7 18" className="h-[18px] w-[7px]" aria-hidden="true">
                      <path d="M0 0v10l6 7.500h1V0z" fill={i === 0 ? "#fff" : i === 4 ? "#e3e6ed" : "#d3d9ea"} />
                      <path d="M0 9l6 8.500h1" fill="none" stroke="#a8b0c0" />
                    </svg>
                    <button
                      type="button"
                      aria-label={i === 4 ? "Add viewport" : undefined}
                      className={`rounded-br-sm border-r border-b border-[#a8b0c0] pr-1 pl-0.5 ${i === 0 ? "bg-white" : i === 4 ? "bg-[#e3e6ed]" : "bg-[#d3d9ea]"}`}
                    >
                      {i === 4 ? <svg viewBox="0 0 9 9" className="mx-1 h-[9px] w-[9px]" aria-hidden="true"><path d="M3.500.500h2v3h3v2h-3v3h-2v-3h-3v-2h3z" fill="#fff" stroke="#555" /></svg> : tab}
                    </button>
                  </div>
                ))}
              </div>
            </div>

            <aside className="flex w-[243px] shrink-0 flex-col pt-[2px] pr-px pl-[7px]">
              <Grip />
              <div className="h-[2px]" />
              <LayersPanel />
              <div className="py-[4px]"><Grip /></div>
              <PropertiesPanel />
            </aside>
          </div>

          <div className={`flex h-[32px] shrink-0 items-center gap-1 border-b border-[#c3c9d6] pb-[2px] pl-[7px] ${lato}`}>
            {snaps.map(([name, on, disabled]) => (
              <label key={name} className="flex items-center gap-1"><Check on={on} disabled={disabled} />{name}</label>
            ))}
          </div>

          <footer className="flex h-4 shrink-0 items-stretch border-t border-[#9fa9ba] text-center font-['Liberation_Sans',sans-serif] leading-[15px]">
            {statusCells.map(([text, width]) => <span key={text} className={`border-r border-[#a8b0c0] ${width}`}>{text}</span>)}
            <span className="flex w-[144px] items-center border-r border-[#a8b0c0] pl-[3px]"><i className="mr-0.5 h-[11px] w-[11px] bg-black" />3D::Massing</span>
            {statusModes.map(([text, width]) => <button key={text} type="button" className={`border-r border-[#a8b0c0] ${width}`}>{text}</button>)}
            <span className="flex-1 pl-[3px] text-left">Memory use: 260 MB</span>
            <span className="w-[22px] border-l border-[#a8b0c0]" />
          </footer>
        </div>
        <div className="w-[5px] shrink-0 bg-linear-to-r from-[#1d5fc4] to-[#0540a8]" />
      </div>
    </div>
  );
};

export default App;
